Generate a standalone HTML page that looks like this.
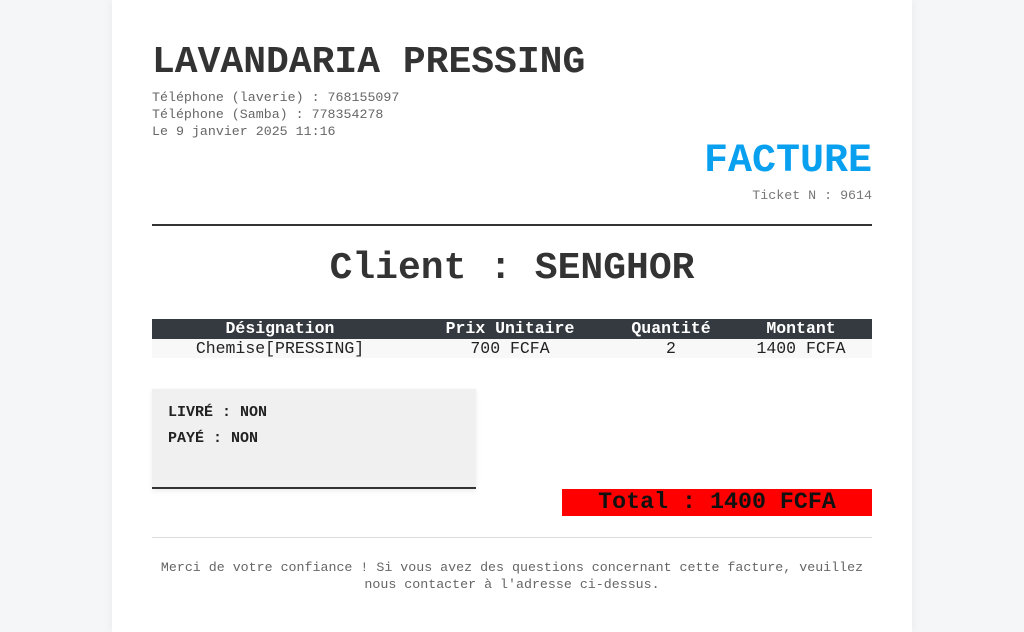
<!DOCTYPE html>
<html><head><meta charset="utf-8"><style>
*{margin:0;padding:0;box-sizing:border-box}
body{width:1024px;height:632px;background:#f5f6f8;font-family:"Liberation Mono",monospace;overflow:hidden;position:relative}
.page{position:absolute;left:112px;top:0;width:800px;height:632px;background:#fff;box-shadow:0 0 10px rgba(0,0,0,.06)}
.a{position:absolute;white-space:nowrap}
h1{position:absolute;left:40px;top:41px;font-size:38px;font-weight:bold;color:#333;line-height:44px}
.info{left:40px;top:89px;font-size:13.3px;line-height:17px;color:#666}
.fact{right:40px;top:140px;font-size:40px;font-weight:bold;color:#0aa0f0;line-height:44px}
.tk{right:40px;top:188px;font-size:13.3px;color:#777}
.hr1{position:absolute;left:40px;top:224px;width:720px;height:2px;background:#333}
.client{left:0;width:800px;text-align:center;top:246px;font-size:38px;font-weight:bold;color:#333;line-height:46px}
table{position:absolute;left:40px;top:319px;width:720px;border-collapse:collapse;font-size:16.5px;table-layout:fixed}
th{background:#343a40;color:#fff;font-weight:bold;height:20px;line-height:20px;padding:0}
td{background:#f8f8f8;color:#222;height:19px;line-height:19px;text-align:center;padding:0}
.box{position:absolute;left:40px;top:389px;width:324px;height:100px;background:#f0f0f0;border-bottom:2px solid #333;box-shadow:0 2px 5px rgba(0,0,0,.08);font-size:15px;font-weight:bold;color:#222;padding:11px 16px;line-height:26px}
.total{position:absolute;left:450px;top:489px;width:310px;height:27px;background:#f00;color:#111;font-size:23.3px;font-weight:bold;text-align:center;line-height:27px}
.hr2{position:absolute;left:40px;top:537px;width:720px;height:1px;background:#ddd}
.foot{position:absolute;left:40px;top:559px;width:720px;text-align:center;font-size:13.3px;color:#666;line-height:17px}
</style></head><body><div class="page">
<h1>LAVANDARIA PRESSING</h1>
<div class="a info">Téléphone (laverie) : 768155097<br>Téléphone (Samba) : 778354278<br>Le 9 janvier 2025 11:16</div>
<div class="a fact">FACTURE</div>
<div class="a tk">Ticket N : 9614</div>
<div class="hr1"></div>
<div class="a client">Client : SENGHOR</div>
<table><colgroup><col style="width:256px"><col style="width:204px"><col style="width:118px"><col style="width:142px"></colgroup>
<tr><th>Désignation</th><th>Prix Unitaire</th><th>Quantité</th><th>Montant</th></tr>
<tr><td>Chemise[PRESSING]</td><td>700 FCFA</td><td>2</td><td>1400 FCFA</td></tr></table>
<div class="box">LIVRÉ : NON<br>PAYÉ : NON</div>
<div class="total">Total : 1400 FCFA</div>
<div class="hr2"></div>
<div class="foot">Merci de votre confiance ! Si vous avez des questions concernant cette facture, veuillez nous contacter à l'adresse ci-dessus.</div>
</div></body></html>
